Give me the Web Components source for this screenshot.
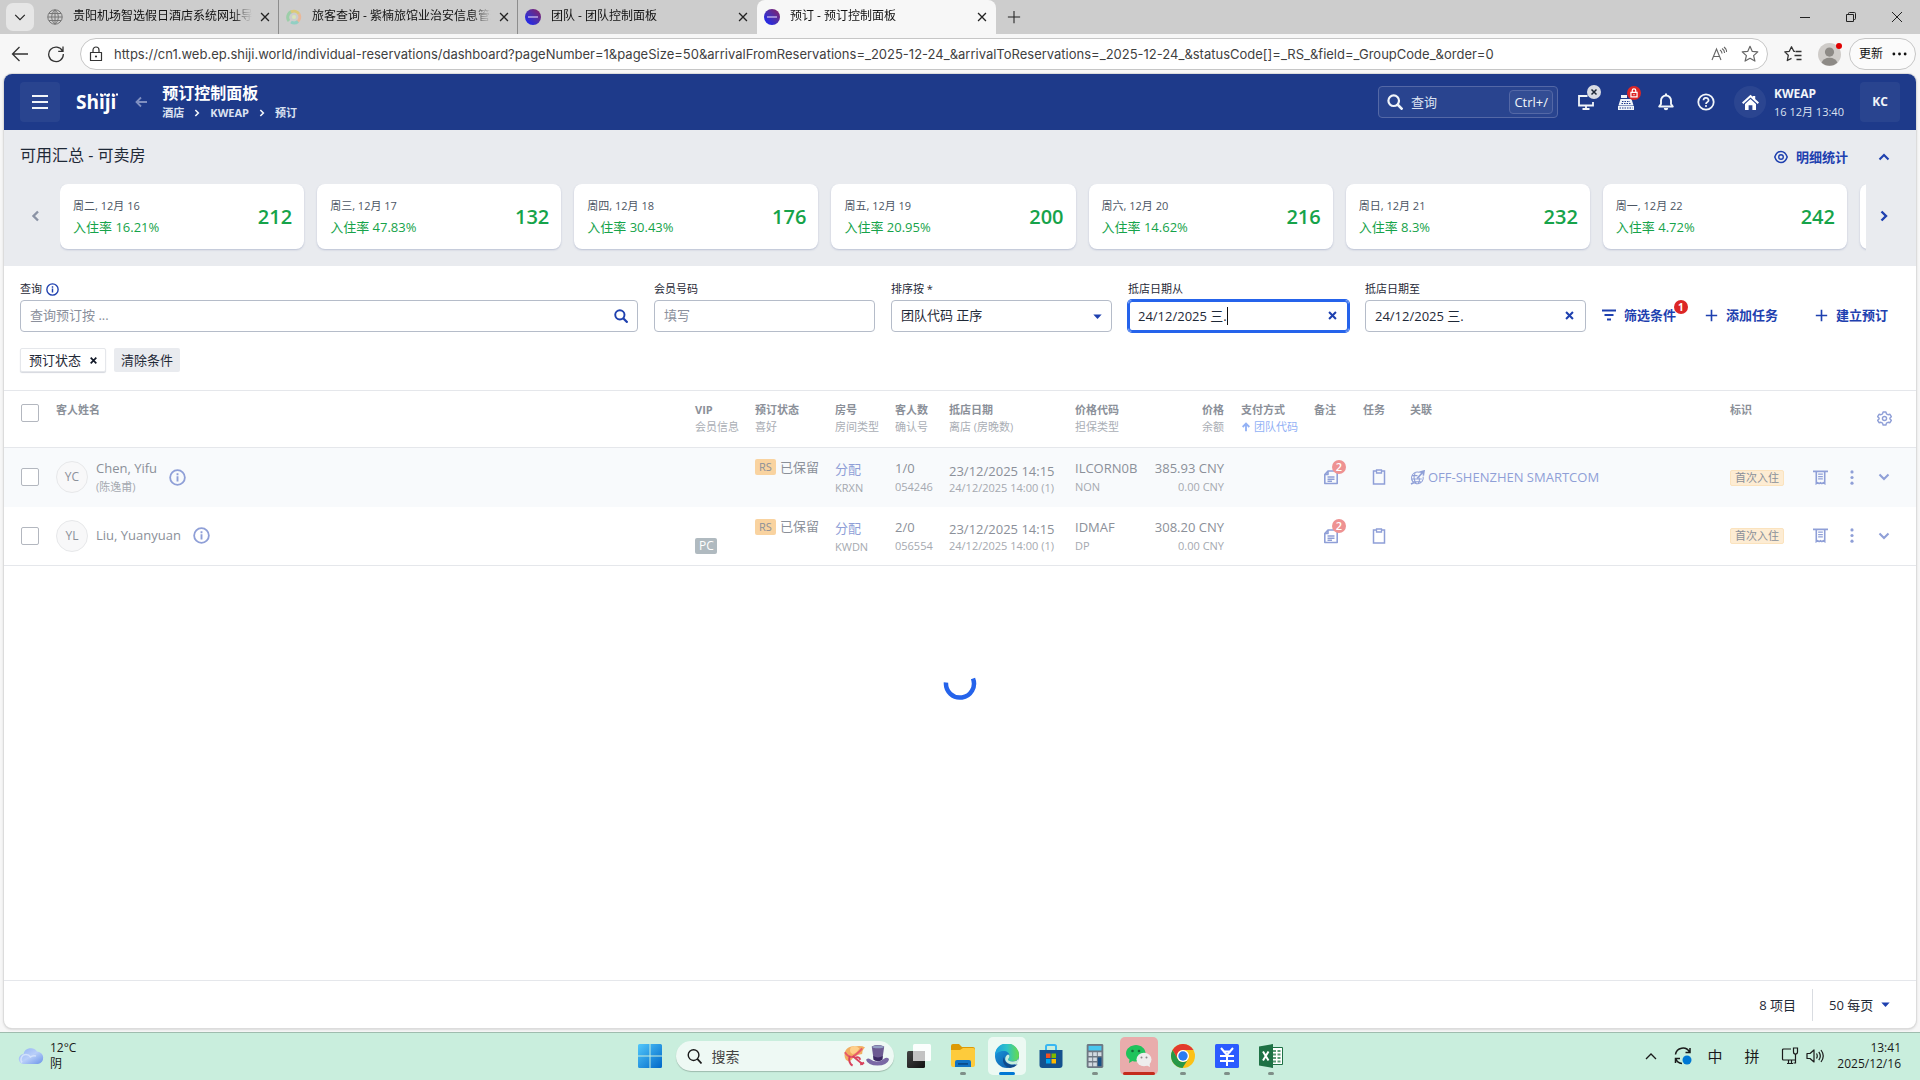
<!DOCTYPE html>
<html lang="zh-CN">
<head>
<meta charset="utf-8">
<title>预订 - 预订控制面板</title>
<style>
html, body { margin: 0; height: 100%; }
body {
  font-family: "Open Sans", "Noto Sans CJK SC", sans-serif;
  font-size: 13px; line-height: 20px; color: #1f2937; background: #f7f7f7;
  display: flex; flex-direction: column; overflow: hidden;
}
</style>
</head>
<body>
<browser-tabs>
  <browser-tab icon="globe">贵阳机场智选假日酒店系统网址导航</browser-tab>
  <browser-tab icon="swirl">旅客查询 - 紫楠旅馆业治安信息管理</browser-tab>
  <browser-tab icon="orb" plain>团队 - 团队控制面板</browser-tab>
  <browser-tab icon="orb" active>预订 - 预订控制面板</browser-tab>
</browser-tabs>
<browser-toolbar></browser-toolbar>
<app-shell>
  <app-header></app-header>
  <availability-summary>
    <day-card rooms="212" rate="16.21%">周二, 12月 16</day-card>
    <day-card rooms="132" rate="47.83%">周三, 12月 17</day-card>
    <day-card rooms="176" rate="30.43%">周四, 12月 18</day-card>
    <day-card rooms="200" rate="20.95%">周五, 12月 19</day-card>
    <day-card rooms="216" rate="14.62%">周六, 12月 20</day-card>
    <day-card rooms="232" rate="8.3%">周日, 12月 21</day-card>
    <day-card rooms="242" rate="4.72%">周一, 12月 22</day-card>
    <day-card></day-card>
  </availability-summary>
  <filter-bar></filter-bar>
  <reservation-list></reservation-list>
  <list-footer></list-footer>
</app-shell>
<task-bar></task-bar>

<script>
const line = (w, d, extra = '') => `<g fill="none" stroke="currentColor" stroke-width="${w}" ${extra}><path d="${d}"/></g>`;
const ICONS = {
  down: ['0 0 16 16', line(1.3, 'M2.5 5.5 8 11l5.500-5.500')],
  x: ['0 0 16 16', line(1.5, 'M3.500 3.500l9 9M12.500 3.500l-9 9')],
  xbold: ['0 0 16 16', line(3, 'M3 3l10 10M13 3 3 13')],
  plusthin: ['0 0 16 16', line(1.2, 'M8 1v14M1 8h14')],
  plus: ['0 0 16 16', line(2, 'M8 1v14M1 8h14')],
  min: ['0 0 12 12', line(1, 'M1 6.500h10')],
  restore: ['0 0 12 12', line(1, 'M1.500 3.500h7v7h-7zM3.500 3.500V2.500q0-1 1-1h5q1 0 1 1v5q0 1-1 1h-1', 'stroke-linejoin="round"')],
  close: ['0 0 12 12', line(1, 'M1 1l10 10M11 1 1 11')],
  globe: ['0 0 16 16', line(1, 'M8 .8a7.200 7.200 0 100 14.400A7.200 7.200 0 108 .8zM8 .8C3.600 4.500 3.600 11.500 8 15.200M8 .8c4.400 3.700 4.400 10.700 0 14.400M8 .8v14.400M.8 8h14.400M2 4.500h12M2 11.500h12')],
  swirl: ['0 0 16 16', `<g fill="none" stroke-width="3" opacity=".75"><path stroke="#8ecf9d" d="M3 12A6 6 0 0 1 6 2.500"/><path stroke="#e2c95e" d="M5 3a6 6 0 0 1 8 2"/><path stroke="#f3b28b" d="M13 5a6 6 0 0 1-2 8"/><path stroke="#7fd0c0" d="M12 12.500A6 6 0 0 1 5 13"/></g><circle cx="8" cy="8" r="2" fill="#d9e6b8"/>`],
  orb: ['0 0 16 16', `<defs><linearGradient id="o" x1="0" y1="1" x2="1" y2="0"><stop offset="0" stop-color="#1226ff"/><stop offset=".5" stop-color="#4a2fb0"/><stop offset="1" stop-color="#8e1f5c"/></linearGradient></defs><circle cx="8" cy="8" r="8" fill="url(#o)"/><path d="M3 8h10" stroke="#b9a9e6" stroke-width="1.500"/>`],
  back: ['0 0 18 18', line(1.3, 'M17 9H1.500M8.500 2 1.500 9l7 7')],
  reload: ['0 0 18 18', line(1.3, 'M15.500 6A7.300 7.300 0 1 0 16.300 9M16 1.500V6.300h-4.800')],
  lock: ['0 0 14 16', line(1.2, 'M1.500 6.500h11v8h-11zM4 6.500V4a3 3 0 0 1 6 0v2.500', 'stroke-linejoin="round"') + '<circle cx="7" cy="10.500" r="1.100" fill="currentColor"/>'],
  aloud: ['0 0 16 16', line(1.1, 'M1 14 5.500 3 10 14M2.600 10.500h5.800M9 4q2 1.200 2 3.500M11 2.500q2.600 1.500 2.600 4.500M13 1q2.600 2 2.600 5')],
  star: ['0 0 18 18', line(1.2, 'M9 1.300l2.300 5.100 5.500.5-4.200 3.700 1.300 5.500L9 13.300l-4.900 2.800 1.300-5.500L1.200 6.900l5.500-.5z', 'stroke-linejoin="round"')],
  favs: ['0 0 18 18', line(1.3, 'M11 6.400 9.800 6.300 7.500 1.800 5.300 6.300l-4.500.6 3.500 3.400-1 5.200 4.200-2.200M11.500 6.500h6M10.500 10.500h7M12.500 14.500h5', 'stroke-linejoin="round"')],
  person: ['0 0 24 24', '<circle cx="12" cy="12" r="12" fill="#cfccc9"/><circle cx="12" cy="9.500" r="4.800" fill="#8d8a86"/><path d="M3.800 20.500a8.300 6 0 0 1 16.400 0A12 12 0 0 1 3.800 20.500z" fill="#8d8a86"/>'],
  dots: ['0 0 16 4', '<g fill="currentColor"><circle cx="2" cy="2" r="1.500"/><circle cx="8" cy="2" r="1.500"/><circle cx="14" cy="2" r="1.500"/></g>'],
  menu: ['0 0 16 16', line(2, 'M0 2h16M0 8h16M0 14h16')],
  left: ['0 0 12 12', line(1.8, 'M12 6H1.500M6 1.500 1.500 6 6 10.500')],
  up: ['0 0 12 12', line(2.2, 'M6 11V2M2 6l4-4 4 4')],
  chevr: ['0 0 12 12', line(2.4, 'M3.500 1.500 8 6l-4.500 4.500')],
  chevl: ['0 0 12 12', line(2.400, 'M8 1.500 3.500 6 8 10.500')],
  chevu: ['0 0 12 12', line(2.100, 'M1.500 8.500 6 4l4.500 4.500')],
  chevd: ['0 0 12 12', line(2.100, 'M1.500 3.500 6 8l4.500-4.500')],
  search: ['0 0 16 16', '<circle cx="6.700" cy="6.700" r="5.300" fill="none" stroke="currentColor" stroke-width="2.200"/>' + line(2.6, 'M10.500 10.500l5 5')],
  searchthin: ['0 0 16 16', '<circle cx="7" cy="6.500" r="5.700" fill="none" stroke="currentColor" stroke-width="1.500"/>' + line(1.8, 'M11 10.500l4.500 5')],
  monitor: ['0 0 16 16', line(1.8, 'M9.500 2H1v9.500h14V8M4.500 15h7M8 11.500V15')],
  register: ['0 0 16 16', '<g fill="currentColor"><path d="M0 12h16v4H0z"/><path d="M2.500 5h11l2 6.500H.5z"/><path d="M3 1h6v3H3z"/></g><path d="M4 7.500h8M3.500 9.500h9M1.500 14h13" stroke="#1e3a8a" stroke-width="1" stroke-dasharray="1.500 1"/>'],
  lockred: ['0 0 16 16', '<circle cx="8" cy="8" r="8" fill="#dc2626"/><path d="M4.500 7.300h7v5h-7zM6 7V5.200a2 2 0 0 1 4 0V7" fill="none" stroke="#fff" stroke-width="1.400"/><path d="M8 9v1.600" stroke="#fff" stroke-width="1.200"/>'],
  bell: ['0 0 18 18', line(1.9, 'M9 2.500a5 5 0 0 0-5 5V11l-1.800 2.500h13.600L14 11V7.500a5 5 0 0 0-5-5z', 'stroke-linejoin="round"') + '<path fill="currentColor" d="M6.800 15h4.400a2.200 2.200 0 0 1-4.400 0zM8 .5h2V3H8z"/>'],
  help: ['0 0 18 18', '<circle cx="9" cy="9" r="7.700" fill="none" stroke="currentColor" stroke-width="1.800"/>' + line(1.7, 'M6.500 7.200a2.500 2.300 0 1 1 3.700 2q-1.200.7-1.200 1.800') + '<circle cx="9" cy="13" r="1.100" fill="currentColor"/>'],
  home: ['0 0 18 18', '<path fill="currentColor" d="M9 .8 0 9l1.400 1.500L9 3.700l7.600 6.800L18 9l-4-3.700V2h-2.500v1z"/><path fill="currentColor" d="M3.200 10.500 9 5.300l5.800 5.200V17H11v-5H7v5H3.200z"/>'],
  eye: ['0 0 14 14', '<path d="M7 1.500c3 0 5.200 2.600 6.200 5.500-1 2.900-3.200 5.500-6.200 5.500S1.800 9.900.8 7C1.800 4.100 4 1.500 7 1.500z" fill="none" stroke="currentColor" stroke-width="1.500"/><circle cx="7" cy="7" r="2.300" fill="none" stroke="currentColor" stroke-width="1.400"/>'],
  info: ['0 0 18 18', '<circle cx="9" cy="9" r="7.800" fill="none" stroke="currentColor" stroke-width="1.900"/><path d="M8 7.700h2v5.500H8zM8 4.500h2v2H8z" fill="currentColor"/>'],
  filter: ['0 0 14 14', line(1.9, 'M0 2.500h14M2.500 7h9M5 11.500h4')],
  caret: ['0 0 10 6', '<path fill="currentColor" d="M0 .5h10L5 6z"/>'],
  gear: ['0 0 16 16', line(1.5, 'M6.500 1h3l.6 2 1.700 1 2-.5 1.500 2.600L13.800 7.500v1l1.500 1.400-1.500 2.600-2-.5-1.700 1-.6 2h-3l-.6-2-1.700-1-2 .5L.7 9.900l1.500-1.400v-1L.7 6.100l1.500-2.600 2 .5 1.700-1z', 'stroke-linejoin="round"') + '<circle cx="8" cy="8" r="2.200" fill="none" stroke="currentColor" stroke-width="1.500"/>'],
  notes: ['0 0 16 16', line(1.6, 'M5 2h9.200v12.500H1.800V5.500zM5 2v3.500H1.800M4.500 8h7M4.500 10.300h7M4.500 12.300h4.500', 'stroke-linejoin="round"')],
  clip: ['0 0 14 16', line(1.5, 'M4 2H1.500v13h11V2H10') + '<path fill="none" stroke="currentColor" stroke-width="1.300" d="M4.500 1h5v3h-5z"/>'],
  world: ['0 0 16 16', line(1.1, 'M10 2.500A6.300 6.300 0 1 0 14 7M5.500 3.500Q2.500 9 7 15M2 6h6M1.500 9.500h11M9.500 8q1.500 3-1 7M3.500 12.500h8') + line(1.7, 'M7.500 9l7-7.500M10 2.500 15 1l-.8 5M1 15l3-1.300')],
  receipt: ['0 0 16 16', line(1.7, 'M0 1.500h16M3.500 1.500v13l1.500-1 1.500 1 1.500-1 1.500 1 1.500-1 1.500 1V1.500') + line(1.3, 'M5.500 4.500h5M5.500 7h5M5.500 9.500h5')],
  kebab: ['0 0 4 16', '<g fill="currentColor"><circle cx="2" cy="2" r="1.700"/><circle cx="2" cy="8" r="1.700"/><circle cx="2" cy="14" r="1.700"/></g>'],
  spinner: ['0 0 34 34', '<path d="M3 16a14 14 0 1 0 27-4" fill="none" stroke="#2563eb" stroke-width="4.500"/>'],
  cloud: ['0 0 26 18', '<defs><linearGradient id="c" x1="0" y1="0" x2="1" y2="1"><stop offset="0" stop-color="#8fb0f3"/><stop offset=".5" stop-color="#b9cff9"/><stop offset="1" stop-color="#6a93e8"/></linearGradient></defs><path d="M6 17a5 5 0 0 1-.5-10A7.500 7.500 0 0 1 19 4.500 6.300 6.300 0 0 1 20 17z" fill="url(#c)"/><path d="M4 15.500a5 5 0 0 1 4-8q3 0 4.500 2.500Q15 8 18 9" fill="none" stroke="#dbe7fd" stroke-width="1.500" opacity=".8"/>'],
  win: ['0 0 24 24', '<defs><linearGradient id="w" x1="0" y1="0" x2="1" y2="1"><stop offset="0" stop-color="#52c8fb"/><stop offset="1" stop-color="#0067c8"/></linearGradient></defs><path fill="url(#w)" d="M1.500 0h10v11.500H0v-10Q0 0 1.500 0zM12.500 0h10Q24 0 24 1.500v10H12.500zM0 12.500h11.500V24h-10Q0 24 0 22.500zM12.500 12.500H24v10q0 1.500-1.500 1.500h-10z"/>'],
  hats: ['0 0 48 24', '<path d="M3 16C-1 9 4 1 12 2q8-1 11 1-3 2-3 7-8 1-11 6-3 3-6 0z" fill="#f2ae62"/><path d="M8 3q5-3 9 1-2 5-7 6-4-2-2-7z" fill="#ffd08b"/><path d="M2 8q3 5 8 5 7-5 10-9" fill="none" stroke="#e75a6b" stroke-width="2"/><path d="M7 12q-2 7 3 10M10 12q5 4 11 9m-9-7q5-2 6 2m0 5 4-2" fill="none" stroke="#d8435d" stroke-width="2"/><path d="M30 2q6-3 13 0l-2 14q-5 3-9 0z" fill="#6c5b91"/><path d="M31.500 12q5 3 10 0l-.5 4q-4 3-9 0z" fill="#3b2a62"/><path d="M24 16q2-2 4-1 8 6 16-1 4-1 4 2-2 6-12 6T24 16z" fill="#7a68a5"/><ellipse cx="36.500" cy="2.500" rx="6" ry="1.500" fill="#94a0c4"/>'],
  taskview: ['0 0 24 24', '<defs><linearGradient id="t" x1="0" y1="0" x2="1" y2="1"><stop offset="0" stop-color="#444"/><stop offset="1" stop-color="#111"/></linearGradient></defs><rect y="7" width="18" height="17" rx="1.500" fill="url(#t)"/><rect x="6" width="18" height="17" rx="1.500" fill="#fff" opacity=".93"/><path d="M6 7h12v10H6z" fill="#c3c3c3"/>'],
  folder: ['0 0 24 24', '<path d="M0 2q0-2 2-2h6l3 3h11q2 0 2 2v3H0z" fill="#dd9a05"/><path d="M0 6h9l3-2h10q2 0 2 2v15q0 2-2 2H2q-2 0-2-2z" fill="#fdcb3c"/><path d="M4 23v-5q0-2 2-2h12q2 0 2 2v5z" fill="#1273c4"/><path d="M7 19h10v1.800H7z" fill="#0a4d8c"/>'],
  edge: ['0 0 24 24', '<defs><linearGradient id="e" x1="0" y1="0" x2="1" y2="0"><stop offset="0" stop-color="#1a9de0"/><stop offset=".5" stop-color="#2dc3c8"/><stop offset="1" stop-color="#67dc4b"/></linearGradient><linearGradient id="e2" x1="0" y1="0" x2="1" y2="1"><stop offset="0" stop-color="#1b9de2"/><stop offset="1" stop-color="#0c4f9e"/></linearGradient></defs><circle cx="12" cy="12" r="12" fill="url(#e2)"/><path d="M0 11A12 12 0 0 1 24 11.500c0 4-3 6-6.500 6-3 0-4.500-1.200-4.500-2 0-.8 1.500-1.300 1.500-3.500C14.500 9 12 7 8.500 7 4 7 1 9.500 0 12z" fill="url(#e)"/><path d="M9 13c0 5 4 8 9 8 2 0 4-.6 4.500-.6A12 12 0 0 1 15 24C9 22.500 6.500 17 9 13z" fill="#114a8b"/><path d="M14.500 12c0 2.200-1.500 2.700-1.500 3.500 0 1 2 2.200 5 2 2 0 4-.7 5-2.500.8 1.500.5 3-.8 4.500-4 2-11 1-12-4-.3-2.500 1.500-4.500 2.800-5 1 .3 1.500 1 1.500 1.500z" fill="#c9eedd"/>'],
  store: ['0 0 24 24', '<path d="M7 6V2.500Q7 1 8.500 1h7Q17 1 17 2.500V6" fill="none" stroke="#39b7f2" stroke-width="2"/><path d="M.5 6h23v15q0 3-3 3h-17q-3 0-3-3z" fill="#14518e"/><path fill="#f25022" d="M7 9.500h4.500V14H7z"/><path fill="#7fba00" d="M12.500 9.500H17V14h-4.500z"/><path fill="#00a4ef" d="M7 15h4.500v4.500H7z"/><path fill="#ffb900" d="M12.500 15H17v4.500h-4.500z"/>'],
  calc: ['0 0 24 26', '<rect x="3" width="18" height="26" rx="1.500" fill="#6e7883"/><path fill="#48c7ef" d="M5 2h14v5H5z"/><path fill="#d2dae1" d="M5 9h4v4H5zM10 9h4v4h-4zM15 9h4v4h-4zM5 14.500h4v4H5zM10 14.500h4v4h-4zM5 20h4v4H5zM10 20h4v4h-4z"/><path fill="#174f86" d="M15 14.500h4V24h-4z"/>'],
  wechat: ['0 0 26 24', '<path d="M10 1c5 0 9.500 3.500 9.500 8.500S15 17.500 10 17.500q-2 0-3.500-.5L3 19l.5-3.500Q0 13 0 9.500C0 4.500 5 1 10 1z" fill="#1fc35c"/><circle cx="6.500" cy="7" r="1.300" fill="#166b38"/><circle cx="13" cy="7" r="1.300" fill="#166b38"/><ellipse cx="18" cy="15.500" rx="7.500" ry="6.800" fill="#eee"/><path d="m20 21 4 2-.5-4z" fill="#eee"/><circle cx="15.500" cy="13.500" r="1" fill="#888"/><circle cx="20.500" cy="13.500" r="1" fill="#888"/>'],
  chrome: ['0 0 24 24', '<circle cx="12" cy="12" r="12" fill="#fbc116"/><path d="M1.600 6A12 12 0 0 1 22.400 6H12a6 6 0 0 0-5.200 9z" fill="#e23a2e"/><path d="M1.600 6A12 12 0 0 0 11.500 24l5.700-9A6 6 0 0 1 6.800 15z" fill="#279847"/><circle cx="12" cy="12" r="6" fill="#fff"/><circle cx="12" cy="12" r="4.700" fill="#2b7cf0"/>'],
  yen: ['0 0 24 24', '<rect width="24" height="24" rx="1.500" fill="#2b5bff"/><path d="M6 4l5.500 6.500h1L18 4M5 12h14M5 17h14M12 11v11M8 7.500h8" fill="none" stroke="#fff" stroke-width="2"/>'],
  excel: ['0 0 24 24', '<path d="M12 3.500h11.500v17H12z" fill="#fff" stroke="#1e7145"/><path d="M14 6h3v2h-3zM18.500 6h3v2h-3zM14 9.500h3v2h-3zM18.500 9.500h3v2h-3zM14 13h3v2h-3zM18.500 13h3v2h-3zM14 16.500h3v2h-3zM18.500 16.500h3v2h-3z" fill="#5c9c77"/><path d="M0 2.500 14 0v24L0 21.500z" fill="#1e7145"/><path d="m4 7.500 5.500 9M9.500 7.500 4 16.500" stroke="#fff" stroke-width="2"/>'],
  sync: ['0 0 18 18', line(1.5, 'M1.500 7.500A7.500 7.500 0 0 1 15.500 5M16 1v4.500h-4.500M1.500 16v-4.500H6M1.800 11.800A7 7 0 0 0 8 16.500') + '<circle cx="13" cy="13" r="4.500" fill="#0078d4"/>'],
  net: ['0 0 18 18', line(1.2, 'M10 2H2.500q-1 0-1 1v9q0 1 1 1h12v-2M6 16.500h6M7.500 13v3.500M10.500 13v3.500M12.500 1h4v4q0 2-2 2t-2-2zM14.500 7v9h-2')],
  sound: ['0 0 18 18', line(1.200, 'M1 6.500h3L8 3v12l-4-3.500H1zM10.500 6.500q1.500 2.500 0 5M12.800 4.800q3 4.200 0 8.400M15 3q4.500 6 0 12', 'stroke-linejoin="round"')],
  tray: ['0 0 12 7', line(1.300, 'M1 6l5-5 5 5')],
};

/* Defines an element whose shadow root is filled from a template string or function. */
function define(name, css, html) {
  customElements.define(name, class extends HTMLElement {
    connectedCallback() {
      if (this.shadowRoot) return;
      const root = this.attachShadow({ mode: 'open' });
      const t = document.createElement('template');
      t.innerHTML = `<style>
        *, *::before { box-sizing: border-box; }
        button, input, select { font: inherit; color: inherit; background: none; border: 0; padding: 0; margin: 0; outline: 0; }
        button { display: flex; align-items: center; justify-content: center; flex: none; }
        ${css}</style>${typeof html === 'function' ? html(this) : html}`;
      root.appendChild(t.content.cloneNode(true));
    }
  });
}
const icon = (name, w = 16, h = w) => `<ui-icon name="${name}" w="${w}" h="${h}"></ui-icon>`;

define('ui-icon', ':host{display:inline-flex;flex:none} svg{display:block}', el => {
  const [box, body] = ICONS[el.getAttribute('name')];
  return `<svg aria-hidden="true" width="${el.getAttribute('w')}" height="${el.getAttribute('h')}" viewBox="${box}">${body}</svg>`;
});

define('browser-tab', `
  :host { display: flex; align-items: center; flex: 0 1 239px; min-width: 0; height: 34px; padding: 0 6px 0 7px; box-sizing: border-box;
          font-size: 12px; color: #111; border-right: 1px solid #8d8d8d; background-clip: padding-box; }
  :host([plain]) { border-color: transparent; }
  :host([active]) { background: #f7f7f7; border-color: transparent; border-radius: 8px 8px 0 0; }
  :host([icon=globe]) { color: #777; }
  .t { flex: 1; color: #111; margin: 0 6px 0 10px; white-space: nowrap; overflow: hidden; line-height: 32px; height: 34px;
       -webkit-mask: linear-gradient(90deg, #000 calc(100% - 20px), transparent); }
  button { color: #222; }`,
  el => `${icon(el.getAttribute('icon'))}<span class="t"><slot></slot></span><button aria-label="关闭">${icon('x', 14)}</button>`);

define('browser-tabs', `
  :host { display: flex; align-items: center; flex: none; height: 34px; background: #cdcdcd; padding: 0 2px 0 6px; color: #222; }
  .list { width: 28px; height: 28px; border-radius: 7px; background: #e6e6e6; margin-right: 6px; }
  .new { width: 36px; height: 34px; }
  .win { margin-left: auto; display: flex; }
  .win button { width: 46px; height: 34px; }
  .win button:last-child { margin-right: -2px; }`,
  `<button class="list" aria-label="标签页">${icon('down', 14)}</button><slot></slot><button class="new" aria-label="新建">${icon('plusthin', 14)}</button>
   <div class="win"><button aria-label="最小化">${icon('min', 12)}</button><button aria-label="还原">${icon('restore', 12)}</button><button aria-label="关闭">${icon('close', 12)}</button></div>`);

define('browser-toolbar', `
  :host { display: flex; align-items: center; flex: none; height: 40px; padding: 0 4px 0 11px; background: #f7f7f7; color: #333; }
  .re { margin: 0 15px 0 18px; }
  .box { flex: 1; display: flex; align-items: center; height: 32px; box-sizing: border-box; border: 1px solid #c6c6c6; border-radius: 16px;
         background: #fff; padding: 0 8px 0 8px; }
  input { flex: 1; min-width: 0; margin-left: 11px; font-family: Inter, sans-serif; font-size: 13px; color: #3f3f3f; height: 28px; }
  .box button { color: #666; margin-left: 14px; }
  .fav { margin: 0 16px; }
  .who { position: relative; }
  .who::after { content: ""; position: absolute; right: -1px; top: 0; width: 6px; height: 6px; border-radius: 3px; background: #e00000; }
  .upd { height: 32px; border: 1px solid #c6c6c6; border-radius: 16px; padding: 0 8px 0 9px; margin-left: 8px; gap: 9px; font-size: 12px; color: #111; background: #fbfbfb; }`,
  `<button aria-label="后退">${icon('back', 18)}</button><button class="re" aria-label="刷新">${icon('reload', 18)}</button>
   <div class="box">${icon('lock', 14, 16)}<input aria-label="地址" value="https://cn1.web.ep.shiji.world/individual-reservations/dashboard?pageNumber=1&amp;pageSize=50&amp;arrivalFromReservations=_2025-12-24_&amp;arrivalToReservations=_2025-12-24_&amp;statusCode[]=_RS_&amp;field=_GroupCode_&amp;order=0">
   <button aria-label="朗读">${icon('aloud', 16)}</button><button aria-label="收藏">${icon('star', 18)}</button></div>
   <button class="fav" aria-label="收藏夹">${icon('favs', 18)}</button><button class="who" aria-label="用户">${icon('person', 23)}</button>
   <button class="upd">更新${icon('dots', 15, 4)}</button>`);

define('app-shell', `
  :host { flex: 1; min-height: 0; display: flex; flex-direction: column; margin: 0 4px 4px; background: #fff; border-radius: 8px;
          overflow: hidden; box-shadow: 0 0 0 1px #dcdcdc, 0 1px 3px #bbb; }`, '<slot></slot>');

define('app-header', `
  :host { display: flex; align-items: center; flex: none; height: 56px; padding: 0 16px; background: #1e3a8a; color: #f1f5f9; }
  .sq { width: 40px; height: 40px; border-radius: 4px; background: rgba(255,255,255,.05); font-size: 12px; font-weight: 700; }
  .logo { position: relative; font-size: 19px; line-height: 28px; font-weight: 700; margin-left: 16px; color: #fff; }
  .logo svg { position: absolute; right: -2px; top: 5px; }
  .bk { margin: 0 15px 0 19px; color: #7f8fc0; }
  .ttl { padding-bottom: 1px; }
  h1 { margin: 0; font-size: 16px; line-height: 22px; font-weight: 700; color: #fff; }
  nav { display: flex; align-items: center; gap: 9px; font-size: 11px; line-height: 17px; font-weight: 700; }
  nav a { color: #dbe2f1; text-decoration: none; }
  .find { display: flex; align-items: center; width: 180px; height: 32px; margin-left: auto; border: 1px solid #5468a6; border-radius: 4px;
          background: rgba(255,255,255,.05); padding: 0 4px 0 8px; }
  .find input { flex: 1; min-width: 0; margin-left: 8px; height: 28px; }
  .find input::placeholder { color: #dbe2f1; opacity: 1; }
  kbd { font: inherit; line-height: 22px; padding: 0 4px; border: 1px solid #5468a6; border-radius: 4px; background: rgba(255,255,255,.05); }
  .tools { display: flex; margin: 0 8px; }
  .tools button { width: 40px; height: 40px; position: relative; }
  .badge { position: absolute; right: 5px; top: 3px; width: 14px; height: 14px; border-radius: 7px; }
  .off { background: #d9dce4; color: #1f2937; display: grid; place-items: center; }
  .home { width: 32px; height: 32px; border-radius: 16px; background: rgba(255,255,255,.06); color: #fff; }
  .prop { margin: 0 14px 0 8px; padding-top: 2px; font-size: 12px; line-height: 18px; width: 72px; white-space: nowrap; }
  .prop b { display: block; } .prop span { color: #dbe2f1; font-size: 11px; }`,
  `<button class="sq" aria-label="菜单">${icon('menu', 16)}</button>
   <div class="logo">Shiji<svg width="22" height="3" aria-hidden="true"><path d="M0 1.500h22" stroke="#fff" stroke-width="2" stroke-dasharray="2 2"/></svg></div>
   <button class="bk" aria-label="返回">${icon('left', 12)}</button>
   <div class="ttl"><h1>预订控制面板</h1><nav><a href="#">酒店</a>${icon('chevr', 8)}<a href="#">KWEAP</a>${icon('chevr', 8)}<a href="#">预订</a></nav></div>
   <div class="find">${icon('search', 16)}<input aria-label="查询" placeholder="查询"><kbd>Ctrl+/</kbd></div>
   <div class="tools"><button aria-label="终端">${icon('monitor', 16)}<span class="badge off">${icon('xbold', 8)}</span></button>
   <button aria-label="收银">${icon('register', 16)}<span class="badge">${icon('lockred', 14)}</span></button>
   <button aria-label="通知">${icon('bell', 18)}</button><button aria-label="帮助">${icon('help', 18)}</button></div>
   <button class="home" aria-label="主页">${icon('home', 17)}</button><div class="prop"><b>KWEAP</b><span>16 12月 13:40</span></div>
   <button class="sq">KC</button>`);

define('day-card', `
  :host { display: flex; align-items: center; justify-content: space-between; flex: none; width: calc((100% - 97px) / 7); height: 65px;
          padding: 0 12px 0 13px; box-sizing: border-box; background: #fff; border-radius: 8px; box-shadow: 0 1px 2px rgba(100,116,160,.35); }
  div { line-height: 21px; } .d { font-size: 11px; color: #4b5563; margin-bottom: 1px; }
  .r, b { color: #16a34a; } b { font-size: 20px; font-weight: 600; }`,
  el => el.hasAttribute('rate') ? `<div><div class="d"><slot></slot></div><div class="r">入住率 ${el.getAttribute('rate')}</div></div><b>${el.getAttribute('rooms')}</b>` : '');

define('availability-summary', `
  :host { display: block; flex: none; background: #e9ebef; padding: 0 16px 13px; color: #1e40af; }
  .top { display: flex; align-items: flex-start; height: 54px; }
  h2 { margin: 13px auto 0 0; font-size: 16px; line-height: 24px; font-weight: 400; color: #1f2937; }
  .top button { height: 24px; margin-top: 15px; font-weight: 700; gap: 8px; }
  .row { display: flex; } .row > button { width: 32px; height: 64px; } .row > .prev { color: #8b93a5; margin-right: 8px; } .next { margin-left: 2px; }
  .col { width: 32px; margin-left: 20px; }
  .cards { flex: 1; min-width: 0; display: flex; gap: 13px; overflow: hidden; padding-bottom: 4px; }`,
  `<div class="top"><h2>可用汇总 - 可卖房</h2><button>${icon('eye', 14)}明细统计</button><button class="col" aria-label="收起">${icon('chevu', 12)}</button></div>
   <div class="row"><button class="prev" aria-label="上一页">${icon('chevl', 12)}</button><div class="cards"><slot></slot></div><button class="next" aria-label="下一页">${icon('chevr', 12)}</button></div>`);

const field = (id, label, body, cls = '') => `<div class="f ${cls}"><label for="${id}">${label}</label><div class="c">${body}</div></div>`;
define('filter-bar', `
  :host { display: block; flex: none; padding: 14px 16px 18px; border-bottom: 1px solid #e5e7eb; }
  .row { display: flex; gap: 16px; align-items: flex-end; }
  .f { flex: none; width: 221px; } .wide { flex: 1; }
  label { display: flex; align-items: center; gap: 4px; font-size: 11px; line-height: 18px; margin-bottom: 2px; }
  ui-icon, .act, .x { color: #1e40af; }
  .c { position: relative; display: flex; align-items: center; height: 32px; border: 1px solid #b5bcc9; border-radius: 4px; padding: 0 9px; }
  .focus .c { border-color: #2563eb; box-shadow: 0 0 0 1px #2563eb, inset 0 0 0 1px #2563eb; }
  .focus .c::after { content: ""; position: absolute; left: 98px; top: 6px; width: 1px; height: 18px; background: #111; }
  input, select { flex: 1; min-width: 0; width: 100%; height: 30px; padding-bottom: 2px; appearance: none; }
  input::placeholder { color: #8b909c; opacity: 1; }
  .x { margin: 0 1px 2px 0; }
  .sel ui-icon { pointer-events: none; }
  .acts { display: flex; gap: 13px; margin-left: -12px; } .acts div { display: flex; gap: 5px; }
  .act { height: 32px; padding: 0 12px 2px; gap: 8px; font-weight: 700; position: relative; }
  .n { position: absolute; right: 0; top: 0; width: 14px; height: 14px; border-radius: 7px; background: #dc2626; color: #fff; font-size: 10px; line-height: 14px; }
  .chips { display: flex; gap: 8px; margin-top: 16px; }
  .chips button { height: 24px; padding: 0 7px; border-radius: 2px; background: #e9ebef; }
  .chips .on { background: #fff; border: 1px solid #e5e7eb; box-shadow: 0 1px 1px #d5d8de; padding: 0 7px 0 8px; gap: 8px; }
  .on ui-icon { color: #111827; }`,
  `<div class="row">
   ${field('q', '查询' + icon('info', 13), `<input id="q" placeholder="查询预订按 ..."><button aria-label="搜索">${icon('search', 14)}</button>`, 'wide')}
   ${field('m', '会员号码', '<input id="m" placeholder="填写">')}
   ${field('s', '排序按 *', `<select id="s"><option>团队代码 正序</option></select>${icon('caret', 9, 5)}`, 'sel')}
   ${field('a', '抵店日期从', `<input id="a" value="24/12/2025 三."><button class="x" aria-label="清除">${icon('xbold', 11)}</button>`, 'focus')}
   ${field('b', '抵店日期至', `<input id="b" value="24/12/2025 三."><button class="x" aria-label="清除">${icon('xbold', 11)}</button>`)}
   <div class="acts"><div><button class="act">${icon('filter', 14)}筛选条件<span class="n">1</span></button><button class="act">${icon('plus', 13)}添加任务</button></div><button class="act">${icon('plus', 13)}建立预订</button></div>
   </div>
   <div class="chips"><button class="on">预订状态${icon('xbold', 9)}</button><button>清除条件</button></div>`);

const head = (a, b = '&nbsp;', cls = '') => `<th class="${cls}"><b>${a}</b><div>${b}</div></th>`;
const bookings = [
  { i: 'YC', name: 'Chen, Yifu', alt: '(陈逸甫)', vip: '', type: 'KRXN', n: '1/0', conf: '054246', code: 'ILCORN0B', g: 'NON', price: '385.93 CNY', rel: 'OFF-SHENZHEN SMARTCOM' },
  { i: 'YL', name: 'Liu, Yuanyuan', alt: '', vip: 'PC', type: 'KWDN', n: '2/0', conf: '056554', code: 'IDMAF', g: 'DP', price: '308.20 CNY', rel: '' },
];
const bookingRow = r => `<tr>
  <td class="ck"><input type="checkbox" aria-label="${r.name}"></td>
  <td><div class="guest"><span class="av">${r.i}</span><div>${r.name}${r.alt ? `<small>${r.alt}</small>` : ''}</div><button aria-label="信息">${icon('info', 17)}</button></div></td>
  <td class="top">${r.vip ? `<span class="vip">${r.vip}</span>` : ''}</td>
  <td class="top"><div class="st"><span class="rs">RS</span>已保留</div></td>
  <td class="low"><a href="#">分配</a><small>${r.type}</small></td>
  <td>${r.n}<small>${r.conf}</small></td>
  <td class="date">23/12/2025 14:15<small>24/12/2025 14:00 (1)</small></td>
  <td>${r.code}<small>${r.g}</small></td>
  <td class="num">${r.price}<small>0.00 CNY</small></td>
  <td></td>
  <td><button class="note" aria-label="备注">${icon('notes', 16)}<span>2</span></button></td>
  <td><button class="task" aria-label="任务">${icon('clip', 14, 16)}</button></td>
  <td>${r.rel ? `<a class="rel" href="#">${icon('world', 15)}${r.rel}</a>` : ''}</td>
  <td><span class="tag">首次入住</span></td>
  <td class="ic"><button aria-label="账单">${icon('receipt', 15)}</button></td>
  <td class="ic"><button aria-label="更多">${icon('kebab', 4, 15)}</button></td>
  <td class="ic end"><button aria-label="展开">${icon('chevd', 12)}</button></td></tr>`;

define('reservation-list', `
  :host { display: block; position: relative; flex: 1; min-height: 0; color: #8b9099; }
  table { width: 100%; border-collapse: collapse; table-layout: fixed; line-height: 19px; }
  thead tr { height: 56px; } tbody tr { height: 60px; } tbody tr:last-child { height: 58px; }
  thead, tbody { border-bottom: 1px solid #e5e7eb; }
  tbody tr:first-child { background: #f8fafc; }
  th, td { padding: 0; text-align: left; white-space: nowrap; vertical-align: middle; }
  th { font-size: 11px; line-height: 17px; font-weight: 400; color: #aaaeb5; vertical-align: top; padding-top: 10px; }
  th b { color: #8b9099; } th .sort, a, button { color: #8f9fd7; text-decoration: none; }
  th .sort { display: flex; align-items: center; gap: 3px; color: #92b1f5; font-weight: 400; }
  small { display: block; font-size: 11px; line-height: 17px; color: #a5a9b0; }
  .ck { padding-left: 17px; } th.ck { padding-top: 13px; }
  input { display: block; appearance: none; width: 18px; height: 18px; border: 1px solid #b3b7bf; border-radius: 2px; background: #fff; }
  .guest { display: flex; align-items: center; }
  .av { width: 32px; height: 32px; line-height: 30px; border: 1px solid #e7e8ea; border-radius: 16px; background: #f8f8f9; text-align: center; margin-right: 8px; font-size: 12px; }
  .guest button { margin-left: 12px; }
  .top { vertical-align: top; padding-top: 10px; }
  .st { display: flex; align-items: center; gap: 4px; }
  .rs, .vip { display: block; height: 16px; line-height: 16px; border-radius: 2px; font-size: 11px; padding: 0 4px; background: #f9d3a0; }
  .rs { width: 21px; }
  .vip { width: 22px; margin-top: 21px; background: #b0bac0; color: #fff; font-size: 12px; }
  .low { padding-top: 2px; } .low a { display: block; } .date { padding-top: 2px; line-height: 18px; } .date small { line-height: 15px; }
  .num { text-align: right; padding-right: 17px; }
  .note { position: relative; margin-left: 9px; } .task { margin-left: 9px; }
  .note span { position: absolute; left: 9px; top: -9px; width: 14px; height: 14px; border-radius: 7px; background: #ee9292; color: #fff; font-size: 11px; font-weight: 600; line-height: 14px; }
  .rel { display: flex; align-items: center; gap: 3px; }
  .tag { display: inline-block; height: 16px; line-height: 14px; border: 1px solid #fbe3be; border-radius: 2px; background: #fdecd3; font-size: 11px; padding: 0 4px; }
  .ic button { width: 32px; } .end { padding-right: 16px; }
  th.gear { vertical-align: middle; padding: 0 16px 0 0; }
  .spin { position: absolute; left: 50%; top: 50%; transform: translate(-50%, -50%); }`,
  `<table><colgroup>${[52, 0, 60, 80, 60, 54, 126, 70, 96, 73, 49, 47, 320, 74, 32, 32, 48].map(w => w ? `<col style="width:${w}px">` : '<col>').join('')}</colgroup>
   <thead><tr><th class="ck"><input type="checkbox" aria-label="全选"></th>${head('客人姓名')}${head('VIP', '会员信息')}${head('预订状态', '喜好')}${head('房号', '房间类型')}${head('客人数', '确认号')}${head('抵店日期', '离店 (房晚数)')}${head('价格代码', '担保类型')}${head('价格', '余额', 'num')}
   ${head('支付方式', `<span class="sort">${icon('up', 10)}团队代码</span>`)}${head('备注')}${head('任务')}${head('关联')}${head('标识')}<th></th><th></th><th class="ic gear"><button aria-label="设置">${icon('gear', 15)}</button></th></tr></thead>
   <tbody>${bookings.map(bookingRow).join('')}</tbody></table>
   <div class="spin" role="status">${icon('spinner', 34)}</div>`);

define('list-footer', `
  :host { display: flex; align-items: center; justify-content: flex-end; flex: none; height: 48px; box-sizing: border-box; border-top: 1px solid #e5e7eb; padding-right: 26px; }
  .v { width: 1px; height: 32px; background: #d9dce1; margin: 0 16px; }
  label { display: flex; align-items: center; gap: 7px; color: #1e40af; }
  select { appearance: none; color: #1f2937; }`,
  `<span>8 项目</span><span class="v"></span><label><select aria-label="每页"><option>50 每页</option></select>${icon('caret', 9, 5)}</label>`);

define('task-item', `
  :host { display: block; flex: none; }
  button { position: relative; width: 44px; height: 46px; }
  button::before { content: ""; position: absolute; inset: 4px 3px; border-radius: 5px; }
  ui-icon { position: relative; }
  :host([current]) button::before { background: rgba(255,255,255,.65); }
  :host([alert]) button::before { background: #e9acac; }
  :host([run]) button::after { content: ""; position: absolute; bottom: 4px; width: 6px; height: 3px; border-radius: 2px; background: #7f8f88; }
  :host([current]) button::after { width: 16px; background: #0078d4; }
  :host([alert]) button::after { width: 32px; background: #c42b1c; }`,
  el => `<button aria-label="${el.getAttribute('icon')}">${icon(el.getAttribute('icon'), el.getAttribute('icon') === 'wechat' ? 26 : 24)}</button>`);

define('task-bar', `
  :host { display: grid; grid-template-columns: 1fr auto 1fr; align-items: center; flex: none; height: 48px; box-sizing: border-box; padding-bottom: 1px;
          border-top: 1px solid #9fbcae; background: #c9eedd; font-size: 12px; line-height: 16px; color: #1a1a1a; }
  .w { justify-self: start; gap: 6px; margin-left: 18px; text-align: left; }
  .mid, .tray { display: flex; align-items: center; }
  .s { display: flex; align-items: center; width: 218px; height: 30px; border-radius: 15px; background: #eef9f4; box-shadow: 0 1px 1px #9dbbad; margin: 0 3px 0 4px; padding: 0 5px 0 11px; }
  .s input { flex: 1; min-width: 0; margin-left: 10px; font-size: 14px; height: 26px; }
  .s input::placeholder { color: #444; opacity: 1; }
  .tray { justify-self: end; padding-right: 19px; }
  .tray button { width: 32px; height: 40px; font-size: 15px; } .tray .py { width: 42px; } .tray .net { width: 58px; gap: 7px; }
  .tray .clock { display: block; width: 70px; font-size: 12px; text-align: right; height: 34px; }`,
  `<button class="w">${icon('cloud', 26, 18)}<span>12°C<br>阴</span></button>
   <div class="mid"><task-item icon="win"></task-item><div class="s">${icon('searchthin', 15)}<input aria-label="搜索" placeholder="搜索">${icon('hats', 46, 24)}</div>
   <task-item icon="taskview"></task-item><task-item icon="folder" run></task-item><task-item icon="edge" run current></task-item><task-item icon="store"></task-item><task-item icon="calc" run></task-item><task-item icon="wechat" run alert></task-item><task-item icon="chrome" run></task-item><task-item icon="yen" run></task-item><task-item icon="excel" run></task-item></div>
   <div class="tray"><button aria-label="更多图标">${icon('tray', 12, 7)}</button><button aria-label="同步">${icon('sync', 18)}</button><button>中</button><button class="py">拼</button>
   <button class="net" aria-label="网络与声音">${icon('net', 18)}${icon('sound', 18)}</button><button class="clock">13:41<br>2025/12/16</button></div>`);
</script>
</body>
</html>
